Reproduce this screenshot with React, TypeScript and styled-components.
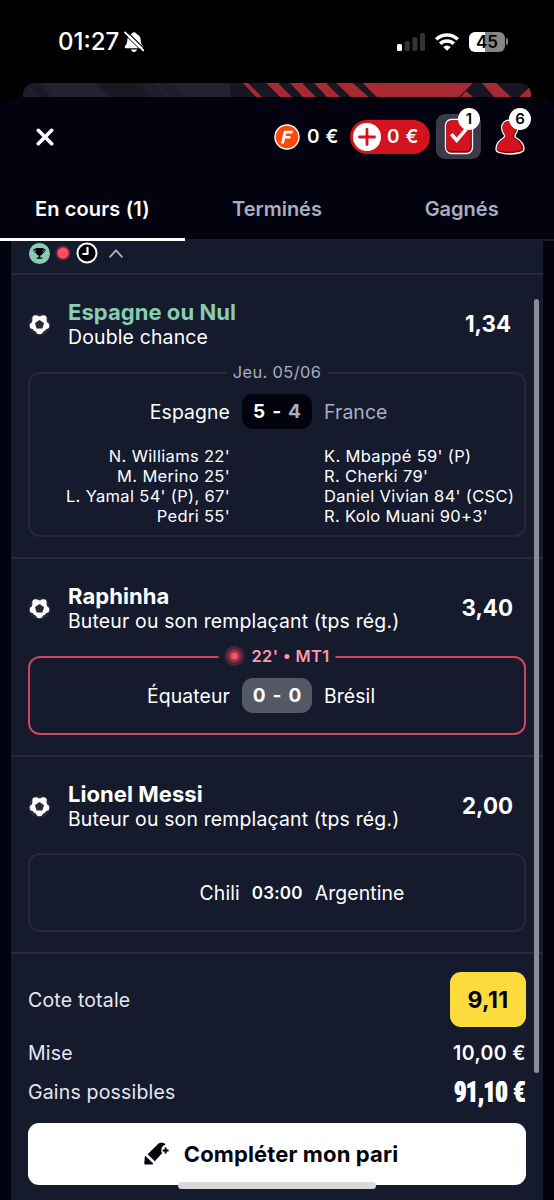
import React from 'react';
import styled, { createGlobalStyle } from 'styled-components';

const GlobalStyle = createGlobalStyle`
  * { box-sizing: border-box; }
  html, body { margin: 0; padding: 0; background: #000; }
  body { font-family: Inter, "Liberation Sans", sans-serif; color: #fff; -webkit-font-smoothing: antialiased; }
  button { font: inherit; color: inherit; border: 0; background: none; padding: 0; margin: 0; }
  svg { display: block; flex: none; }
`;

const Screen = styled.div`
  position: relative;
  width: 554px;
  height: 1200px;
  overflow: hidden;
  background: #000;
  display: flex;
  flex-direction: column;
`;

const StatusBar = styled.header`
  height: 83px;
  flex: none;
  display: flex;
  align-items: center;
  padding: 0 46px 0 58px;
`;

const Clock = styled.span`
  font-size: 24px;
  font-weight: 500;
  line-height: 30px;
  width: 66px;
  white-space: nowrap;
`;

const StatusIcons = styled.div`
  margin-left: auto;
  display: flex;
  align-items: center;
  gap: 10px;
`;

const Battery = styled.div`
  width: 39px;
  display: flex;
  align-items: center;
  gap: 1px;
`;

const BatteryBody = styled.span`
  width: 36px;
  height: 20px;
  border-radius: 6px;
  background: linear-gradient(90deg, #fff 0 45%, #858585 45%);
  color: #000;
  font-size: 17px;
  font-weight: 600;
  line-height: 20px;
  text-align: center;
`;

const BatteryTip = styled.span`
  width: 2px;
  height: 7px;
  border-radius: 0 2px 2px 0;
  background: #858585;
`;

const Backdrop = styled.div`
  height: 14px;
  flex: none;
  margin: 0 23px;
  border-radius: 12px 12px 0 0;
  overflow: hidden;
`;

const Sheet = styled.main`
  flex: 1;
  min-height: 0;
  display: flex;
  flex-direction: column;
  background: #03020f;
  border-radius: 14px 14px 0 0;
`;

const TopBar = styled.div`
  height: 80px;
  flex: none;
  display: flex;
  align-items: center;
  padding: 0 28px 1px 36px;
`;

const Wallet = styled.div`
  margin-left: auto;
  display: flex;
  align-items: center;
`;

const Amount = styled.span<{ $ml: number }>`
  margin-left: ${p => p.$ml}px;
  padding-top: 1px;
  font-size: 19px;
  font-weight: 600;
  line-height: 24px;
  letter-spacing: 0.6px;
  white-space: nowrap;
`;

const FreebetAmount = styled.div`
  width: 76px;
  display: flex;
  align-items: center;
`;

const DepositPill = styled.button`
  width: 80px;
  height: 34px;
  border-radius: 17px;
  background: #d3131f;
  display: flex;
  align-items: center;
  padding-left: 3px;
`;

const IconButton = styled.button<{ $active?: boolean; $ml: number; $w: number }>`
  position: relative;
  margin-left: ${p => p.$ml}px;
  width: ${p => p.$w}px;
  height: 45px;
  border-radius: 9px;
  background: ${p => (p.$active ? '#393b48' : 'transparent')};
  display: flex;
  justify-content: center;
  align-items: center;
`;

const Badge = styled.span<{ $right: number }>`
  position: absolute;
  top: -6px;
  right: ${p => p.$right}px;
  width: 22px;
  height: 22px;
  border-radius: 50%;
  background: #fff;
  color: #03020f;
  font-size: 15px;
  font-weight: 600;
  line-height: 22px;
  text-align: center;
`;

const Tabs = styled.nav`
  height: 64px;
  flex: none;
  display: grid;
  grid-template-columns: repeat(3, 1fr);
  box-shadow: inset 0 -2px #1a1b29;
`;

const Tab = styled.button<{ $active?: boolean }>`
  padding-top: 3px;
  border-bottom: 3px solid ${p => (p.$active ? '#fff' : 'transparent')};
  color: ${p => (p.$active ? '#fff' : '#a9aec3')};
  font-size: 20px;
  font-weight: 600;
  line-height: 24px;
  letter-spacing: ${p => (p.$active ? 0.15 : 0)}px;
  white-space: nowrap;
`;

const Ticket = styled.section`
  flex: 1;
  min-height: 0;
  position: relative;
  margin: 0 11px;
  background: #161a2d;
`;

const Legs = styled.div`
  height: 34px;
  display: flex;
  align-items: center;
  padding: 0 0 8px 18px;
  border-bottom: 2px solid #262a3b;
`;

const LegStates = styled.div`
  display: flex;
  align-items: center;
  gap: 3px;
  margin-right: 11px;
`;

const Leg = styled.article<{ $h: number }>`
  height: ${p => p.$h}px;
  padding: 25px 17px 0;
  border-bottom: 2px solid #262a3b;
`;

const LegHead = styled.div`
  height: 50px;
  display: flex;
  align-items: center;

  > svg { margin-bottom: 2px; }
`;

const LegText = styled.div`
  margin-left: 17px;
  flex: 1;
`;

const LegTitle = styled.h2<{ $won?: boolean }>`
  margin: 0;
  font-size: 22px;
  font-weight: 700;
  line-height: 25px;
  letter-spacing: 0.05px;
  color: ${p => (p.$won ? '#88cdb2' : '#fff')};
`;

const LegMarket = styled.p`
  margin: 0;
  font-size: 19.4px;
  line-height: 25px;
  letter-spacing: 0.18px;
`;

const Odds = styled.span<{ $pr: number }>`
  padding: 0 ${p => p.$pr}px 2px 0;
  font-size: 22.3px;
  font-weight: 650;
  line-height: 26px;
`;

const Match = styled.div<{ $h: number; $live?: boolean; $mt: number }>`
  position: relative;
  height: ${p => p.$h}px;
  margin-top: ${p => p.$mt}px;
  border: 2px solid ${p => (p.$live ? '#cb475d' : '#25293a')};
  border-radius: 12px;
`;

const MatchLabel = styled.span<{ $live?: boolean }>`
  position: absolute;
  left: 50%;
  top: -14px;
  transform: translateX(-50%);
  padding: 0 6px;
  background: #161a2d;
  display: flex;
  align-items: center;
  gap: 7px;
  white-space: nowrap;
  font-size: 16.4px;
  line-height: 24px;
  letter-spacing: 0.4px;
  font-weight: ${p => (p.$live ? 600 : 400)};
  color: ${p => (p.$live ? '#ff98a5' : '#a9aec3')};
`;

const LiveTime = styled.span`
  display: flex;
  align-items: center;
  gap: 6px;
`;

const Separator = styled.i`
  width: 5px;
  height: 5px;
  margin-top: 1px;
  border-radius: 50%;
  background: currentColor;
`;

const ScoreLine = styled.div<{ $mt: number }>`
  margin-top: ${p => p.$mt}px;
  height: 35px;
  display: grid;
  grid-template-columns: 1fr 70px 1fr;
  column-gap: 12px;
  align-items: center;
`;

const Team = styled.span<{ $home?: boolean; $lost?: boolean }>`
  text-align: ${p => (p.$home ? 'right' : 'left')};
  color: ${p => (p.$lost ? '#a9aec3' : '#fff')};
  font-size: 19.4px;
  line-height: 24px;
  letter-spacing: 0.1px;
`;

const Score = styled.span<{ $live?: boolean }>`
  height: 35px;
  border-radius: 11px;
  background: ${p => (p.$live ? '#555966' : '#03020f')};
  display: flex;
  align-items: center;
  justify-content: center;
  gap: 7px;
  font-size: 19px;
  font-weight: 700;
`;

const Lost = styled.span`
  color: #a9aec3;
`;

const Scorers = styled.div`
  margin-top: 17px;
  display: grid;
  grid-template-columns: 1fr 1fr;
  column-gap: 94px;
`;

const ScorerList = styled.ul<{ $home?: boolean }>`
  margin: 0;
  padding: 0;
  list-style: none;
  text-align: ${p => (p.$home ? 'right' : 'left')};
  font-size: 16.5px;
  line-height: 20px;
  letter-spacing: 0.33px;
  white-space: nowrap;
`;

const Fixture = styled.div`
  height: 76px;
  display: flex;
  align-items: center;
  justify-content: center;
  gap: 12px;
  padding-left: 50px;
`;

const Kickoff = styled.time`
  font-size: 17px;
  font-weight: 600;
  letter-spacing: 0.2px;
`;

const Summary = styled.div`
  padding: 18px 17px 0;
`;

const SummaryRow = styled.div<{ $h: number }>`
  height: ${p => p.$h}px;
  display: flex;
  align-items: center;
  justify-content: space-between;
  font-size: 19.5px;
  letter-spacing: 0.18px;
  color: #e6e8f0;
`;

const TotalOdds = styled.span`
  width: 76px;
  height: 55px;
  border-radius: 11px;
  background: #fcdc3c;
  color: #03020f;
  display: flex;
  align-items: center;
  justify-content: center;
  font-size: 23px;
  font-weight: 650;
  letter-spacing: 0.3px;
`;

const Stake = styled.span`
  color: #fff;
  font-weight: 600;
  letter-spacing: 0.4px;
`;

const Payout = styled.strong`
  width: 72px;
  padding-right: 1px;
  display: flex;
  justify-content: flex-end;
  color: #fff;
`;

const PayoutText = styled.span`
  font-family: Roboto, Inter, sans-serif;
  font-size: 29px;
  font-weight: 900;
  line-height: 30px;
  white-space: nowrap;
  word-spacing: 1px;
  text-shadow: 0.8px 0 #fff, -0.8px 0 #fff;
  transform: scaleX(0.7);
  transform-origin: right center;
`;

const CompleteButton = styled.button`
  width: 100%;
  height: 62px;
  margin-top: 17px;
  padding-right: 12px;
  border-radius: 11px;
  background: #fff;
  color: #03020f;
  display: flex;
  align-items: center;
  justify-content: center;
  gap: 15px;
  font-size: 22px;
  font-weight: 700;
  letter-spacing: 0.12px;
`;

const ScrollThumb = styled.div`
  position: absolute;
  top: 58px;
  right: 4px;
  width: 5px;
  height: 774px;
  border-radius: 3px;
  background: #8b8d98;
`;

const HomeIndicator = styled.div`
  position: absolute;
  left: 178px;
  bottom: 11px;
  width: 198px;
  height: 7px;
  border-radius: 4px;
  background: #d9d9d9;
`;

const MutedBell = () => (
  <svg width="20" height="22" viewBox="0 0 20 22">
    <path d="M10 1.2c-1.4 0-2.3.8-2.5 1.8C4.700 4 3.400 6.200 3.300 9c-.1 3.200-.9 4.500-2.300 6-.6.700-.5 2.200.8 2.200h16.400c1.300 0 1.400-1.500.8-2.200-1.400-1.500-2.200-2.800-2.300-6-.1-2.800-1.400-5-4.200-6-.2-1-1.100-1.800-2.500-1.800z" fill="#fff" />
    <path d="M7 18.600h6c-.3 1.400-1.500 2.300-3 2.300s-2.700-.9-3-2.300z" fill="#fff" />
    <path d="M2.300 0l18.500 18" stroke="#000" strokeWidth="1.200" />
    <path d="M0 2.800l18.500 18" stroke="#000" strokeWidth="1" />
    <path d="M1 1.400l18.300 18" stroke="#fff" strokeWidth="1.900" strokeLinecap="round" />
  </svg>
);

const Signal = () => (
  <svg width="28" height="18" viewBox="0 0 28 18">
    <rect x="0" y="11" width="5" height="7" rx="1.500" fill="#fff" />
    <rect x="7.700" y="8" width="5" height="10" rx="1.500" fill="#333" />
    <rect x="15.400" y="4" width="5" height="14" rx="1.500" fill="#333" />
    <rect x="23" y="0" width="5" height="18" rx="1.500" fill="#333" />
  </svg>
);

const Wifi = () => (
  <svg width="24" height="18" viewBox="0 0 24 18" fill="none" stroke="#fff" strokeWidth="3.400">
    <path d="M1.200 6.400a15.300 15.300 0 0 1 21.600 0" />
    <path d="M5.200 10.800a9.600 9.600 0 0 1 13.600 0" />
    <path d="M12 17.800l-3.700-3.800a5.200 5.200 0 0 1 7.400 0z" fill="#fff" stroke="none" />
  </svg>
);

const BannerArt = () => (
  <svg width="508" height="14" viewBox="0 0 508 14">
    <rect width="508" height="14" fill="#1d1e29" />
    <path d="M16 0h57l14 14H30zM130 0h6l14 14h-7zM148 0h59v14h-42z" fill="#22232e" />
    <path d="M4 0h9l14 14h-9zM73 0h40l14 14H87z" fill="#191924" />
    <path d="M207 0h301v14H207z" fill="#171621" />
    <path d="M220 0h5l14 14h-6zM243 0h12l14 14h-12zM267 0h12l14 14h-13zM291 0h12l14 14h-13zM313 0h17l16 14h-18zM348 0h102l-14 14h-76zM443 8l7 6h-12zM459 0h14l15 14h-17zM496 14l12-11v11z" fill="#a72a33" />
    <path d="M340 0h100l-11 14h-76z" fill="#a72a33" />
    <path d="M330 0h8l16 14h-8z" fill="#171621" />
  </svg>
);

const CloseIcon = () => (
  <svg width="18" height="18" viewBox="0 0 18 18">
    <path d="M2.300 2.300l13.400 13.400M15.700 2.300L2.300 15.700" stroke="#fff" strokeWidth="3.600" strokeLinecap="round" />
  </svg>
);

const FreebetIcon = () => (
  <svg width="26" height="26" viewBox="0 0 26 26">
    <circle cx="13" cy="13" r="12" fill="#fb4a0b" stroke="#fff" strokeWidth="1.400" />
    <path d="M9.900 6.800h9l-.7 2.700h-6l-.6 2.500h5.100l-.6 2.600h-5.100l-1.100 4.800H7z" fill="#fff" />
  </svg>
);

const PlusIcon = () => (
  <svg width="28" height="28" viewBox="0 0 28 28">
    <circle cx="14" cy="14" r="14" fill="#fff" />
    <path d="M14 6.500v15M6.500 14h15" stroke="#d3131f" strokeWidth="2.800" strokeLinecap="round" />
  </svg>
);

const TicketIcon = () => (
  <svg width="30" height="37" viewBox="0 0 30 37">
    <rect x="1.500" y="1.500" width="27" height="34" rx="6" fill="#7c0914" stroke="#fff" strokeWidth="1.300" />
    <rect x="2.500" y="2.500" width="24" height="30.500" rx="5" fill="#d3131f" />
    <path d="M8.500 17.500l4.200 4.800L21 12.500" fill="none" stroke="#fff" strokeWidth="3.600" strokeLinecap="square" />
  </svg>
);

const ProfileIcon = () => (
  <svg width="30" height="36" viewBox="0 0 30 36">
    <path d="M14.500 1C9.500 1 6.600 4.700 6.600 9c0 3 1.500 5 2.800 7.200.6 1.200-.1 2.200-1.600 3.100C3.700 21.800 1 25.800 1 30.200c0 2 1.300 2.800 3.200 3.300 6.500 1.900 14.500 1.900 21.300 0 2.200-.6 3.500-1.500 3.500-3.400 0-4.500-3.200-8.500-7.200-10.800-1.700-1-2.300-2-1.500-3.200C21.700 14 23 12 23 9c0-4.500-3.500-8-8.500-8z" fill="#7c0914" stroke="#fff" strokeWidth="1.300" />
    <path d="M14 2C9.800 2 7.600 5.200 7.600 9c0 2.700 1.400 4.600 2.700 6.700.9 1.700 0 3.200-1.900 4.400C4.500 22.500 2 26 2 29.800c0 1.200.8 1.500 2 1.800 6.500 1.600 13.500 1.600 20 0 1.500-.4 2.400-1 2.400-2.100 0-3.900-2.700-7.200-6.400-9.300-2-1.200-2.800-2.800-1.700-4.600C19.600 13.600 21 11.500 21 9c0-4-2.800-7-7-7z" fill="#d3131f" />
  </svg>
);

const WonIcon = () => (
  <svg width="21" height="21" viewBox="0 0 21 21">
    <circle cx="10.500" cy="10.500" r="10.500" fill="#88cdb2" />
    <path d="M6.500 5h8v2.600c0 2.700-1.300 4.600-3.200 5v1.800h2v1.400H7.700v-1.400h2v-1.800c-1.900-.4-3.200-2.300-3.200-5z" fill="#03020f" />
    <path d="M6.700 6.400H4.900c0 2 .8 3.200 2.500 3.400M14.300 6.400h1.800c0 2-.8 3.200-2.500 3.400" fill="none" stroke="#03020f" strokeWidth="1" />
  </svg>
);

const LiveDot = ({ large }: { large?: boolean }) => (
  <svg width="20" height="20" viewBox="0 0 20 20">
    <circle cx="10" cy="10" r={large ? 10 : 8} fill={large ? '#51253a' : '#3a2035'} />
    <circle cx="10" cy="10" r="6.500" fill="#93344a" />
    <circle cx="10" cy="10" r={large ? 3.5 : 5.3} fill="#ff5063" />
  </svg>
);

const PendingIcon = () => (
  <svg width="22" height="22" viewBox="0 0 22 22">
    <circle cx="11" cy="11" r="9.500" fill="#000" stroke="#fff" strokeWidth="2" />
    <path d="M11.500 5.800V12H7.300" fill="none" stroke="#fff" strokeWidth="2.200" strokeLinecap="round" strokeLinejoin="round" />
  </svg>
);

const Chevron = () => (
  <svg width="14" height="9" viewBox="0 0 14 9">
    <path d="M1.200 7.700L7 1.300l5.800 6.400" fill="none" stroke="#a9aec3" strokeWidth="1.900" strokeLinecap="round" strokeLinejoin="round" />
  </svg>
);

const BallIcon = () => (
  <svg width="23" height="23" viewBox="0 0 23 23">
    <circle cx="11.500" cy="11.500" r="11" fill="#2b2b35" />
    <g fill="#fff">
      <circle cx="11.500" cy="11.500" r="8.200" />
      <circle cx="7.600" cy="5.600" r="3.300" />
      <circle cx="15.400" cy="5.600" r="3.300" />
      <circle cx="18" cy="12.800" r="3.300" />
      <circle cx="11.500" cy="17.900" r="3.300" />
      <circle cx="5" cy="12.800" r="3.300" />
    </g>
    <path d="M11.500 8l3.600 2.500-1.300 4.200H9.200l-1.300-4.200z" fill="#2b2b35" stroke="#2b2b35" strokeWidth="1.600" strokeLinejoin="round" />
  </svg>
);

const MarkerPlus = () => (
  <svg width="25" height="24" viewBox="0 0 25 24" fill="#03020f">
    <path d="M3.600 12.300L13.800 2.200c1.300-1.300 2.700-1.800 4.400-1.400l2 .5 1.400 1.300a5.700 5.700 0 0 0-3.500 8.600l-7.300 8z" />
    <path d="M2 14.400l6.900 6.900c.4.500.1 1.100-.5 1.200H1.600c-.8.100-1.400-.5-1.300-1.300L.8 14.800c.1-.7.700-.9 1.200-.4z" />
    <path d="M21.600 5.500v6M18.600 8.500h6" stroke="#03020f" strokeWidth="2" />
  </svg>
);

type LegHeaderProps = { title: string; market: string; odds: string; won?: boolean; inset: number };

const LegHeader = ({ title, market, odds, won, inset }: LegHeaderProps) => (
  <LegHead>
    <BallIcon />
    <LegText>
      <LegTitle $won={won}>{title}</LegTitle>
      <LegMarket>{market}</LegMarket>
    </LegText>
    <Odds $pr={inset}>{odds}</Odds>
  </LegHead>
);

const homeScorers = ["N. Williams 22'", "M. Merino 25'", "L. Yamal 54' (P), 67'", "Pedri 55'"];
const awayScorers = ["K. Mbappé 59' (P)", "R. Cherki 79'", "Daniel Vivian 84' (CSC)", "R. Kolo Muani 90+3'"];

export default function App() {
  return (
    <Screen>
      <GlobalStyle />
      <StatusBar>
        <Clock>01:27</Clock>
        <MutedBell />
        <StatusIcons>
          <Signal />
          <Wifi />
          <Battery>
            <BatteryBody>45</BatteryBody>
            <BatteryTip />
          </Battery>
        </StatusIcons>
      </StatusBar>
      <Backdrop>
        <BannerArt />
      </Backdrop>
      <Sheet>
        <TopBar>
          <CloseIcon />
          <Wallet>
            <FreebetAmount>
              <FreebetIcon />
              <Amount $ml={7}>0 €</Amount>
            </FreebetAmount>
            <DepositPill>
              <PlusIcon />
              <Amount $ml={6}>0 €</Amount>
            </DepositPill>
            <IconButton $active $ml={6} $w={45}>
              <TicketIcon />
              <Badge $right={1}>1</Badge>
            </IconButton>
            <IconButton $ml={12} $w={33}>
              <ProfileIcon />
              <Badge $right={-5}>6</Badge>
            </IconButton>
          </Wallet>
        </TopBar>
        <Tabs>
          <Tab $active>En cours (1)</Tab>
          <Tab>Terminés</Tab>
          <Tab>Gagnés</Tab>
        </Tabs>
        <Ticket>
          <Legs>
            <LegStates>
              <WonIcon />
              <LiveDot />
              <PendingIcon />
            </LegStates>
            <Chevron />
          </Legs>
          <Leg $h={284}>
            <LegHeader title="Espagne ou Nul" market="Double chance" odds="1,34" won inset={15} />
            <Match $h={165} $mt={22}>
              <MatchLabel>Jeu. 05/06</MatchLabel>
              <ScoreLine $mt={20}>
                <Team $home>Espagne</Team>
                <Score>
                  <span>5</span>
                  <span>-</span>
                  <Lost>4</Lost>
                </Score>
                <Team $lost>France</Team>
              </ScoreLine>
              <Scorers>
                <ScorerList $home>
                  {homeScorers.map(s => <li key={s}>{s}</li>)}
                </ScorerList>
                <ScorerList>
                  {awayScorers.map(s => <li key={s}>{s}</li>)}
                </ScorerList>
              </Scorers>
            </Match>
          </Leg>
          <Leg $h={198}>
            <LegHeader title="Raphinha" market="Buteur ou son remplaçant (tps rég.)" odds="3,40" inset={13} />
            <Match $h={79} $mt={22} $live>
              <MatchLabel $live>
                <LiveDot large />
                <LiveTime>
                  22'
                  <Separator />
                  MT1
                </LiveTime>
              </MatchLabel>
              <ScoreLine $mt={20}>
                <Team $home>Équateur</Team>
                <Score $live>
                  <span>0</span>
                  <span>-</span>
                  <span>0</span>
                </Score>
                <Team>Brésil</Team>
              </ScoreLine>
            </Match>
          </Leg>
          <Leg $h={197}>
            <LegHeader title="Lionel Messi" market="Buteur ou son remplaçant (tps rég.)" odds="2,00" inset={13} />
            <Match $h={79} $mt={21}>
              <Fixture>
                <Team>Chili</Team>
                <Kickoff>03:00</Kickoff>
                <Team>Argentine</Team>
              </Fixture>
            </Match>
          </Leg>
          <Summary>
            <SummaryRow $h={55}>
              <span>Cote totale</span>
              <TotalOdds>9,11</TotalOdds>
            </SummaryRow>
            <SummaryRow $h={51}>
              <span>Mise</span>
              <Stake>10,00 €</Stake>
            </SummaryRow>
            <SummaryRow $h={28}>
              <span>Gains possibles</span>
              <Payout>
                <PayoutText>91,10 €</PayoutText>
              </Payout>
            </SummaryRow>
            <CompleteButton>
              <MarkerPlus />
              Compléter mon pari
            </CompleteButton>
          </Summary>
          <ScrollThumb />
        </Ticket>
      </Sheet>
      <HomeIndicator />
    </Screen>
  );
}
